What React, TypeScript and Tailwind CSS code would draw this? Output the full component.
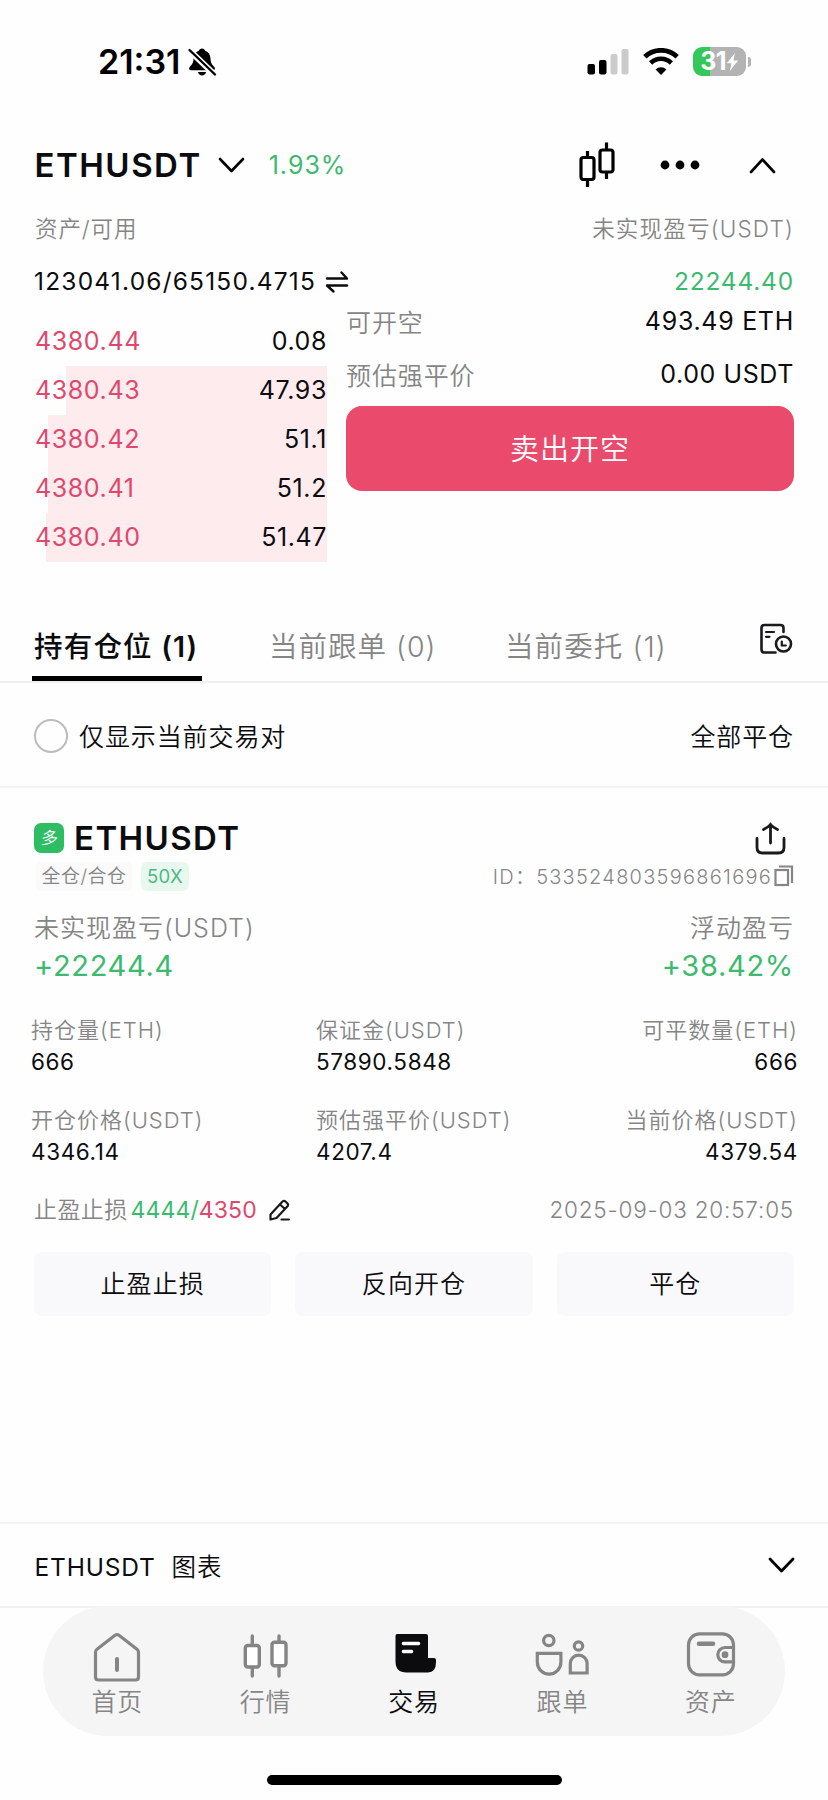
import { useState } from 'react'

interface Ask {
  price: string
  amount: string
  bar: string
}

interface Metric {
  label: string
  value: string
}

const asks: Ask[] = [
  { price: '4380.44', amount: '0.08', bar: 'w-0' },
  { price: '4380.43', amount: '47.93', bar: 'w-[261px]' },
  { price: '4380.42', amount: '51.1', bar: 'w-[279px]' },
  { price: '4380.41', amount: '51.2', bar: 'w-[279px]' },
  { price: '4380.40', amount: '51.47', bar: 'w-[281px]' },
]

const metrics: Metric[] = [
  { label: '持仓量(ETH)', value: '666' },
  { label: '保证金(USDT)', value: '57890.5848' },
  { label: '可平数量(ETH)', value: '666' },
  { label: '开仓价格(USDT)', value: '4346.14' },
  { label: '预估强平价(USDT)', value: '4207.4' },
  { label: '当前价格(USDT)', value: '4379.54' },
]

const metricAlign = ['items-start', 'items-start', 'items-end']

function StatusBar() {
  return (
    <div className="flex h-[123px] items-center pl-[98px] pr-[77px]">
      <span className="text-[34px] font-semibold leading-none text-black">21:31</span>
      <svg className="ml-[7px]" width="30" height="30" viewBox="0 0 30 30">
        <path d="M15 1.500c-1.600 0-2.800 1-3.200 2.300C8.300 5 6.500 8 6.500 12c0 4.500-2.500 6.500-4 8.200-.9 1.200-.3 3 1.500 3h22c1.800 0 2.400-1.800 1.500-3-1.500-1.700-4-3.700-4-8.200 0-4-1.800-7-5.300-8.200C17.800 2.500 16.600 1.500 15 1.500z" />
        <path d="M11 25h8c-.3 2-2 3.500-4 3.500S11.300 27 11 25z" />
        <path d="M0 1l29 28" stroke="white" strokeWidth="6" />
        <path d="M2.500 3l25.500 24.500" stroke="black" strokeWidth="2.400" strokeLinecap="round" />
      </svg>
      <div className="ml-auto flex items-center">
        <svg width="43" height="28" viewBox="0 0 43 28">
          <rect x="0.500" y="16" width="7.500" height="10.500" rx="2" fill="black" />
          <rect x="12" y="12" width="7.500" height="14.500" rx="2" fill="black" />
          <rect x="23.500" y="6" width="7" height="20.500" rx="2" fill="#cbcbcb" />
          <rect x="34.500" y="1" width="7" height="25.500" rx="2" fill="#cbcbcb" />
        </svg>
        <svg className="ml-[13px]" width="36" height="28" viewBox="0 0 36 28">
          <path d="M1.800 8.800a23.500 23.500 0 0 1 32.400 0" fill="none" stroke="black" strokeWidth="4.800" />
          <path d="M7.600 15a15 15 0 0 1 20.800 0" fill="none" stroke="black" strokeWidth="4.600" />
          <path d="M18 27l-5.400-5.500a7.700 7.700 0 0 1 10.800 0z" fill="black" />
        </svg>
        <div className="ml-[14px] flex h-[29px] w-[53px] items-center justify-center rounded-[9px] bg-linear-to-r from-[#34c759] from-32% to-[#b3b3b3] to-32%">
          <span className="text-[25px] font-bold leading-none tracking-[-0.6px] text-white">31</span>
          <svg width="13" height="20" viewBox="0 0 13 20">
            <path d="M9 1L0.800 11.200h4.700L3.800 19 12.200 8.600H7.400z" fill="white" />
          </svg>
        </div>
        <div className="ml-[2px] h-[10px] w-[3px] rounded-r-full bg-[#b3b3b3]" />
      </div>
    </div>
  )
}

function Header() {
  return (
    <div className="flex h-[84px] items-center pl-[34.5px] pr-[52px]">
      <h1 className="text-[33px] font-semibold leading-none tracking-[1.5px]">ETHUSDT</h1>
      <svg className="ml-[16px]" width="27" height="17" viewBox="0 0 27 17">
        <path d="M2 2l11.500 12L25 2" fill="none" stroke="black" strokeWidth="2.600" strokeLinecap="round" strokeLinejoin="round" />
      </svg>
      <span className="ml-[24px] text-[25px] leading-none tracking-[1px] text-[#3dba6e]">1.93%</span>
      <div className="ml-auto flex items-center">
        <svg width="36" height="46" viewBox="0 0 36 46" fill="none" stroke="black" strokeWidth="3.200">
          <rect x="2" y="15.500" width="13" height="22" rx="2.500" />
          <rect x="21" y="8" width="13" height="22" rx="2.500" />
          <path d="M8.500 9v6.500M8.500 37.500V45M27.500 .5V8M27.500 30v7" />
        </svg>
        <svg className="ml-[45px]" width="40" height="10" viewBox="0 0 40 10">
          <circle cx="5" cy="5" r="4.400" />
          <circle cx="20" cy="5" r="4.400" />
          <circle cx="35" cy="5" r="4.400" />
        </svg>
        <svg className="ml-[49px]" width="27" height="17" viewBox="0 0 27 17">
          <path d="M2 15L13.500 2.500 25 15" fill="none" stroke="black" strokeWidth="2.600" strokeLinecap="round" strokeLinejoin="round" />
        </svg>
      </div>
    </div>
  )
}

function NavIcon({ name }: { name: string }) {
  if (name === 'home') {
    return (
      <svg width="54" height="52" viewBox="0 0 54 52" fill="none" stroke="#858585" strokeWidth="3.200">
        <path d="M5.500 21.500q0-2 1.500-3.200L25 4.300q2-1.500 4 0l18 14q1.500 1.200 1.500 3.200V46q0 3-3 3h-37q-3 0-3-3z" />
        <path d="M27 28v11" strokeWidth="4" strokeLinecap="round" />
      </svg>
    )
  }
  if (name === 'market') {
    return (
      <svg width="54" height="52" viewBox="0 0 54 52" stroke="#858585" strokeWidth="3.400">
        <rect x="6.300" y="14.500" width="14" height="21.500" rx="2.500" fill="white" />
        <rect x="33" y="11.300" width="14" height="23.500" rx="2.500" fill="white" />
        <path d="M13.300 5v9M13.300 36.500v8.500M40 5v6M40 35v10" strokeLinecap="round" />
      </svg>
    )
  }
  if (name === 'trade') {
    return (
      <svg width="54" height="52" viewBox="0 0 54 52">
        <path d="M10 3h29q2 0 2 2v22h6q2 0 2 2v2q0 10.500-8 10.500H19.500q-11 0-11-11V5q0-2 1.500-2z" fill="#0c0c0e" />
        <path d="M16.500 12.500h15M16.500 20.500h8" stroke="white" strokeWidth="3.600" strokeLinecap="round" />
      </svg>
    )
  }
  if (name === 'copy') {
    return (
      <svg width="54" height="52" viewBox="0 0 54 52" fill="none" stroke="#858585" strokeWidth="3.200">
        <circle cx="13.800" cy="9.500" r="5.200" />
        <path d="M2.300 22.300h23.600v9a11.800 11.800 0 0 1-23.600 0z" />
        <circle cx="43.500" cy="15" r="4.200" />
        <path d="M35.300 42v-9.500a8.400 8.400 0 0 1 16.800 0V42z" />
      </svg>
    )
  }
  return (
    <svg width="54" height="52" viewBox="0 0 54 52" fill="none" stroke="#858585" strokeWidth="3.200">
      <rect x="4.500" y="2.800" width="45" height="41" rx="11" />
      <path d="M15 12.700h14" strokeWidth="4.600" strokeLinecap="round" />
      <path d="M49.500 16.500H41a7.200 7.200 0 0 0 0 14.400h8.500" />
      <circle cx="41" cy="23.700" r="3.400" fill="#858585" stroke="none" />
    </svg>
  )
}

const navItems = [
  { id: 'home', label: '首页' },
  { id: 'market', label: '行情' },
  { id: 'trade', label: '交易' },
  { id: 'copy', label: '跟单' },
  { id: 'assets', label: '资产' },
]

export default function App() {
  const [activeNav, setActiveNav] = useState('trade')
  const [onlyCurrent, setOnlyCurrent] = useState(false)

  return (
    <div className="h-[1800px] w-[828px] overflow-hidden bg-[#fefefe] font-['Inter','Noto_Sans_CJK_SC_DemiLight','Noto_Sans_CJK_SC_Light','Noto_Sans_CJK_SC',sans-serif] text-[#0c0c0e]">
      <StatusBar />
      <Header />

      {/* Account summary */}
      <div className="flex h-[45px] items-center justify-between pl-[35px] pr-[34px] text-[22.5px] font-[350] leading-none text-[#858585]">
        <span className="tracking-[0.9px]">资产/可用</span>
        <span className="tracking-[1.2px]">未实现盈亏(USDT)</span>
      </div>
      <div className="flex h-[59px] items-center pl-[34px] pr-[34px] text-[24.5px] leading-none">
        <span className="tracking-[1.2px]">123041.06/65150.4715</span>
        <svg className="ml-[9px]" width="24" height="24" viewBox="0 0 24 24" fill="none" stroke="#0c0c0e" strokeWidth="2.400" strokeLinecap="round" strokeLinejoin="round">
          <path d="M2 8.500h20L16.500 2.500M22 15.500H2l6.500 6" />
        </svg>
        <span className="ml-auto tracking-[0.8px] text-[#3dba6e]">22244.40</span>
      </div>

      <div className="flex h-[251px] pl-[35px] pr-[34px]">
        {/* Asks */}
        <div className="w-[292px] pt-[6px] text-[25px] leading-none tracking-[0.6px]">
          {asks.map((ask) => (
            <div key={ask.price} className="relative flex h-[49px] items-center justify-between">
              <div className={`absolute inset-y-0 right-0 bg-[#fdebee] ${ask.bar}`} />
              <span className="relative text-[#e0486b]">{ask.price}</span>
              <span className="relative">{ask.amount}</span>
            </div>
          ))}
        </div>
        <div className="ml-[19px] flex-1 text-[25px] leading-none">
          <div className="flex h-6 items-center justify-between">
            <span className="tracking-[0.9px] text-[#858585]">可开空</span>
            <span className="pb-[3px] tracking-[0.7px]">493.49 ETH</span>
          </div>
          <div className="mt-[29px] flex h-6 items-center justify-between">
            <span className="tracking-[0.9px] text-[#858585]">预估强平价</span>
            <span className="pb-[3px] tracking-[0.6px]">0.00 USDT</span>
          </div>
          <button className="mt-[18px] h-[85px] w-[448px] rounded-2xl bg-[#ea4a6b] pt-[2px] text-[29px] tracking-[1px] text-white">
            卖出开空
          </button>
        </div>
      </div>

      {/* Tabs */}
      <div className="mt-[49px] flex h-[72px] border-b-2 border-[#f0f0f1] pl-[32px] pr-[35px] text-[28.5px] tracking-[1px]">
        <div className="flex w-[170px] items-center whitespace-nowrap border-b-[5px] border-black pl-[2px] pt-[8px] font-['Inter','Noto_Sans_CJK_SC_Medium','Noto_Sans_CJK_SC',sans-serif] font-semibold tracking-[1.2px]">持有仓位 (1)</div>
        <div className="ml-[67px] flex w-[236px] items-center pt-[3px] font-[350] text-[#858585]">当前跟单 (0)</div>
        <div className="flex items-center pt-[3px] font-[350] tracking-[1.1px] text-[#858585]">当前委托 (1)</div>
        <svg className="ml-auto mt-[12px]" width="34" height="32" viewBox="0 0 34 32" fill="none" stroke="#1a1a1c" strokeWidth="2.600" strokeLinecap="round">
          <path d="M24.500 9V5q0-3-3-3h-16q-3 0-3 3v21.500q0 3 3 3h11" />
          <path d="M7 9h8M7 13.800h3.500" strokeWidth="2.200" />
          <circle cx="24.500" cy="21" r="7.500" />
          <path d="M22.800 18.500v4h4" strokeWidth="2.200" />
        </svg>
      </div>

      <div className="flex h-[105px] items-center border-b-2 border-[#f3f3f4] pl-[34px] pr-[34px] pt-[3px] text-[25px] tracking-[0.9px]">
        <button
          onClick={() => setOnlyCurrent(!onlyCurrent)}
          className={`size-[34px] rounded-full border-2 border-[#bcbcbc] ${onlyCurrent ? 'bg-black' : ''}`}
        />
        <span className="ml-[11px] pt-[4px]">仅显示当前交易对</span>
        <span className="ml-auto pt-[4px]">全部平仓</span>
      </div>

      {/* Position card */}
      <div className="px-[34px] pt-[30px]">
        <div className="flex h-10 items-center">
          <div className="flex size-[30px] items-center justify-center rounded-[7px] bg-[#2ebd63] pt-px text-[17px] leading-none text-white">
            <span className="-skew-x-6">多</span>
          </div>
          <h2 className="ml-[10px] text-[33px] font-semibold leading-none tracking-[1.4px]">ETHUSDT</h2>
          <svg className="ml-auto mr-[8px]" width="31" height="33" viewBox="0 0 31 33" fill="none" stroke="#1a1a1c" strokeWidth="2.800" strokeLinecap="round">
            <path d="M2 16.500v9q0 5.500 5.500 5.500h16q5.500 0 5.500-5.500v-9" />
            <path d="M15.500 21V2.500M8.500 7.500q5-2.500 7-5 2 2.500 7 5" />
          </svg>
        </div>
        <div className="flex h-9 items-center font-[350]">
          <div className="ml-[2px] flex h-[29px] w-[96px] items-center justify-center rounded-md bg-[#fafafb] pt-[3px] text-[19px] tracking-[0.5px] text-[#858585]">全仓/合仓</div>
          <div className="ml-[9px] flex h-[29px] w-[48px] items-center justify-center rounded-md bg-[#e8f8ef] pt-px text-[18.5px] font-normal tracking-[0.4px] text-[#4fb884]">50X</div>
          <span className="ml-auto pt-[2px] text-[20px] tracking-[1.25px] text-[#858585]">ID：533524803596861696</span>
          <svg className="ml-[2px]" width="20" height="22" viewBox="0 0 20 22" fill="none" stroke="#858585" strokeWidth="2.200">
            <rect x="1.500" y="5" width="12.500" height="15" />
            <path d="M5 1.500h13V18" />
          </svg>
        </div>

        <div className="mt-[16px] flex h-9 items-center justify-between text-[25px] font-[350] leading-none tracking-[1px] text-[#858585]">
          <span>未实现盈亏(USDT)</span>
          <span>浮动盈亏</span>
        </div>
        <div className="flex h-10 items-center justify-between pb-[2px] text-[29px] leading-none tracking-[0.7px] text-[#3dba6e]">
          <span>+22244.4</span>
          <span>+38.42%</span>
        </div>

        <div className="-ml-[3px] -mr-[4px] mt-[28px] grid grid-cols-[285px_238px_1fr] gap-y-[26px]">
          {metrics.map((m, i) => (
            <div key={m.label} className={`flex flex-col whitespace-nowrap ${metricAlign[i % 3]}`}>
              <span className="text-[22px] font-[350] leading-8 tracking-[1px] text-[#858585]">{m.label}</span>
              <span className="text-[22.5px] leading-8 tracking-[0.6px]">{m.value}</span>
            </div>
          ))}
        </div>

        <div className="mt-[22px] flex h-10 items-center text-[23px] leading-none">
          <span className="tracking-[0.4px] text-[#858585]">止盈止损</span>
          <span className="ml-[3px] tracking-[0.1px] text-[#3dba6e]">4444/</span>
          <span className="tracking-[0.1px] text-[#e0486b]">4350</span>
          <svg className="ml-[11px]" width="23" height="23" viewBox="0 0 23 23" fill="none" stroke="#1a1a1c" strokeWidth="2.200" strokeLinecap="round" strokeLinejoin="round">
            <path d="M2.500 15.500L14.500 2.500q1.500-1.200 3 0l2 2q1.200 1.300 0 2.800L8.500 19l-6 1.500zM12 5.500l5 4.500M13.500 20.500h7.500" />
          </svg>
          <span className="ml-auto text-[22.5px] font-[350] tracking-[0.8px] text-[#858585]">2025-09-03 20:57:05</span>
        </div>

        <div className="mt-[22px] grid grid-cols-3 gap-[24px] text-[25px] tracking-[1.1px]">
          <button className="h-16 rounded-lg bg-[#f9f9fb] pt-[2px]">止盈止损</button>
          <button className="h-16 rounded-lg bg-[#f9f9fb] pt-[2px]">反向开仓</button>
          <button className="h-16 rounded-lg bg-[#f9f9fb] pt-[2px]">平仓</button>
        </div>
      </div>

      {/* Chart drawer */}
      <div className="mt-[206px] flex h-[86px] items-center border-y-2 border-[#f2f2f3] pl-[34.5px] pr-[33px] pt-[5px] text-[24.5px] tracking-[0.8px]">
        <span>ETHUSDT</span>
        <span className="ml-[16px]">图表</span>
        <svg className="mb-[5px] ml-auto" width="27" height="17" viewBox="0 0 27 17">
          <path d="M2 2l11.500 12L25 2" fill="none" stroke="black" strokeWidth="2.800" strokeLinecap="round" strokeLinejoin="round" />
        </svg>
      </div>

      <div className="mx-[43px] -mt-[2px] flex h-[130px] rounded-full bg-[#f5f5f5]">
        {navItems.map((item) => (
          <button
            key={item.id}
            onClick={() => setActiveNav(item.id)}
            className={`flex flex-1 flex-col items-center pt-[25px] text-[25px] leading-none tracking-[0.8px] ${activeNav === item.id ? 'text-[#0c0c0e]' : 'text-[#858585]'}`}
          >
            <NavIcon name={item.id} />
            <span className="mt-[7px]">{item.label}</span>
          </button>
        ))}
      </div>
      <div className="mx-auto mt-[39px] h-[10px] w-[295px] rounded-full bg-black" />
    </div>
  )
}
